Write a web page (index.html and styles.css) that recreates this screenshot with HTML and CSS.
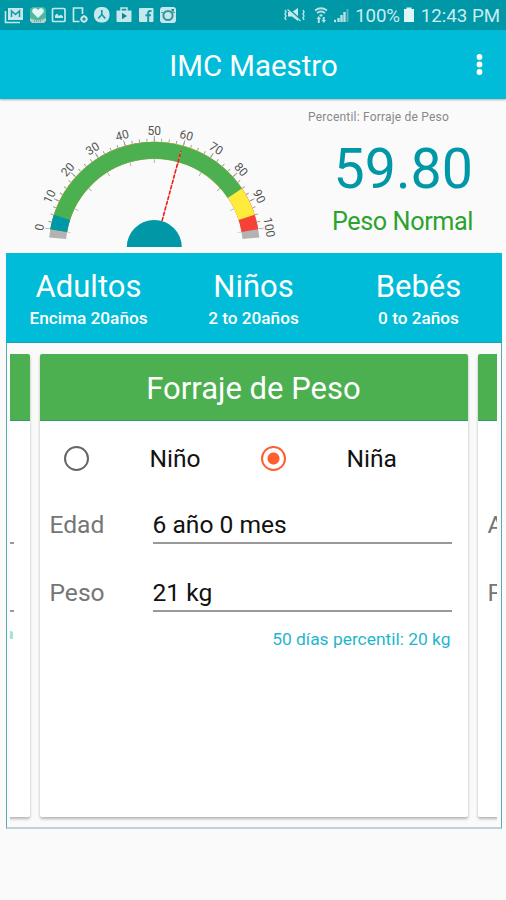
FILE: index.html
```html
<!DOCTYPE html>
<html lang="es">
<head>
    <meta charset="UTF-8">
    <meta name="viewport" content="width=device-width, initial-scale=1.0">
    <title>IMC Maestro</title>
    <link rel="stylesheet" href="styles.css">
</head>
<body>
    <div class="status-bar">
        <div class="status-icons">
            <!-- mail -->
            <svg width="20" height="18" viewBox="0 0 20 18"><path d="M4 2h15v12H4z" fill="#c5e8ec"/><path d="M1.500 5v11.500H16" fill="none" stroke="#c5e8ec" stroke-width="1.600"/><path d="M7.500 11V5l4 3.500 4-3.500v6" fill="none" stroke="#159aa8" stroke-width="1.500"/></svg>
            <!-- health -->
            <svg width="18" height="18" viewBox="0 0 18 18"><rect x="1" y="1" width="16" height="15" rx="4" fill="#4db99f"/><path d="M9 12L3.500 6.500C2 3 6.500.500 9 4c2.500-3.500 7-1 5.500 2.500z" fill="#e2f6f3"/><path d="M1 12c3 1.500 5 2 8 2s5-.500 8-2v3l-2 2H3l-2-2z" fill="#b9cfc9"/><path d="M5 15h8" stroke="#57817d" stroke-dasharray="1 1"/></svg>
            <!-- picture -->
            <svg width="16" height="18" viewBox="0 0 16 18"><rect x="1.500" y="2.500" width="12.500" height="13" rx="1" fill="none" stroke="#c5e8ec" stroke-width="1.700"/><path d="M4 12V9.500l2-2 2 2.500 2-1.500 2 2V12z" fill="#c5e8ec"/></svg>
            <!-- device settings -->
            <svg width="18" height="18" viewBox="0 0 18 18"><path d="M10.500 8V2H1.500v13.500h6" fill="none" stroke="#c5e8ec" stroke-width="1.700"/><circle cx="12" cy="13" r="2.500" fill="none" stroke="#c5e8ec" stroke-width="2"/><path d="M12 9v8M8 13h8" stroke="#c5e8ec" stroke-width="1.200"/><circle cx="12" cy="13" r="1.500" fill="#0d98a7"/></svg>
            <!-- person -->
            <svg width="17" height="18" viewBox="0 0 17 18"><rect x="0" y="1" width="15.500" height="15.500" rx="6.500" fill="#c5e8ec"/><path d="M7.800 4v4.500l-3.500 4M7.800 8.500l3.500 4" fill="none" stroke="#159aa8" stroke-width="1.700"/></svg>
            <!-- play store -->
            <svg width="18" height="18" viewBox="0 0 18 18"><path d="M.500 4.500h15V15a1 1 0 0 1-1 1h-13a1 1 0 0 1-1-1z" fill="#c5e8ec"/><path d="M5 5V2h6v3" fill="none" stroke="#c5e8ec" stroke-width="1.500"/><path d="M6 6.800l5 3.200-5 3.200z" fill="#0d8594"/></svg>
            <!-- facebook -->
            <svg width="16" height="18" viewBox="0 0 16 18"><rect x="0" y="2" width="14.500" height="14" rx="1" fill="#c5e8ec"/><path d="M12.500 5h-1.500q-1.800 0-1.800 2v9M6.500 9.300h5.500" fill="none" stroke="#159aa8" stroke-width="2"/></svg>
            <!-- instagram -->
            <svg width="18" height="18" viewBox="0 0 18 18"><rect x="1" y="1" width="16" height="16" rx="3" fill="#c5e8ec"/><circle cx="9" cy="9.500" r="4.600" fill="none" stroke="#2f97a2" stroke-width="2"/><path d="M2 6.500h3M13 6.500h3" stroke="#4aa5ae"/><rect x="12.500" y="3" width="2.500" height="2.500" fill="#218d99"/></svg>
        </div>
        <div class="status-info">
            <!-- vibrate / muted -->
            <svg width="24" height="18" viewBox="0 0 24 18"><path d="M5 6h4l6-4v13l-6-4.500H5z" fill="#c9ecef"/><path d="M5.500 2.500l12 11" stroke="#0097a7" stroke-width="1.500"/><path d="M4.500 3.500l13 11.500M2 4l1 2-1 2 1 2-1 2 1 2M20 4l1 2-1 2 1 2-1 2 1 2" fill="none" stroke="#b9e2e7" stroke-width="1.500"/></svg>
            <!-- wifi -->
            <svg class="wifi" width="14" height="18" viewBox="0 0 14 18"><path d="M1 4.500q6-4.500 12 0M3 7q4-3 8 0" fill="none" stroke="#b9e2e7" stroke-width="1.800"/><path d="M5 9q2-1.500 4 0l-2 2zM2.500 13l2.300-3 2.200 3H5.800v4H3.800v-4zM7.500 14h1.200v-3h2v3H12l-2.200 3z" fill="#b9e2e7"/></svg>
            <!-- signal -->
            <svg width="18" height="18" viewBox="0 0 18 18"><path d="M2 15h2M6.500 16v-4M9.500 16V9M12.500 16V6" stroke="#b9e2e7" stroke-width="2.400"/><path d="M15.500 16V3" stroke="#55b5c0" stroke-width="2"/></svg>
            <span class="battery-text">100%</span>
            <svg class="battery" width="12" height="18" viewBox="0 0 12 18"><path d="M3.500 1.500h5v1.500H11V16H1V3h2.500z" fill="#dff6f8"/></svg>
            <span class="clock">12:43 PM</span>
        </div>
    </div>

    <div class="header">
        <span class="header-side"></span>
        <h1 class="title">IMC Maestro</h1>
        <span class="header-side menu">
            <svg width="8" height="24" viewBox="0 0 8 24"><g fill="#fff"><circle cx="4.500" cy="4" r="2.900"/><circle cx="4.500" cy="11.500" r="2.900"/><circle cx="4.500" cy="19" r="2.900"/></g></svg>
        </span>
    </div>

    <div class="summary">
        <svg class="gauge" width="290" height="148" viewBox="0 100 290 148">
            <!-- scale: 0 sits 10deg above the left horizon, 1.6deg per unit -->
            <g transform="translate(154.300 247.500)" fill="none">
                <g stroke-width="17">
                    <path d="M-96.650 -9.300A97.100 97.100 0 0 1 96.650 -9.300" stroke="#b3b3b3"/>
                    <path d="M-95.630 -16.860A97.100 97.100 0 0 1 95.630 -16.860" stroke="#f44336"/>
                    <path d="M-95.630 -16.860A97.100 97.100 0 0 1 92.350 -30.010" stroke="#ffeb3b"/>
                    <path d="M-95.630 -16.860A97.100 97.100 0 0 1 80.500 -54.300" stroke="#4caf50"/>
                    <path d="M-95.630 -16.860A97.100 97.100 0 0 1 -92.350 -30.010" stroke="#0097a7"/>
                </g>
                <path class="ticks" pathLength="640" d="M-105.870 -18.670A107.500 107.500 0 0 1 105.870 -18.670" stroke-dasharray="2 14" stroke-dashoffset="1" stroke-width="3"/>
                <path class="ticks" pathLength="400" d="M-107.350 -18.930A109 109 0 0 1 107.350 -18.930" stroke-dasharray="1.200 38.800" stroke-dashoffset=".6" stroke-width="5"/>
                <path class="ticks" pathLength="400" d="M-85.190 -15.020A86.500 86.500 0 0 1 85.190 -15.020" stroke-dasharray="1.200 38.800" stroke-dashoffset=".6" stroke-width="4"/>
            </g>
            <g class="gauge-labels" transform="translate(154.300 247.500)">
                <text transform="rotate(-80)" y="-112.500">0</text>
                <text transform="rotate(-64)" y="-112.500">10</text>
                <text transform="rotate(-48)" y="-112.500">20</text>
                <text transform="rotate(-32)" y="-112.500">30</text>
                <text transform="rotate(-16)" y="-112.500">40</text>
                <text y="-112.500">50</text>
                <text transform="rotate(16)" y="-112.500">60</text>
                <text transform="rotate(32)" y="-112.500">70</text>
                <text transform="rotate(48)" y="-112.500">80</text>
                <text transform="rotate(64)" y="-112.500">90</text>
                <text transform="rotate(80)" y="-112.500">100</text>
            </g>
            <path d="M162 221L181 151" stroke="#ff8a80" stroke-width="1"/>
            <path d="M162 221L181 151" stroke="#f01818" stroke-width="1.500" stroke-dasharray="4 1.500"/>
            <path d="M126.800 247a27.500 27 0 0 1 55 0z" fill="#0097a7"/>
        </svg>
        <div class="result">
            <div class="result-label">Percentil: Forraje de Peso</div>
            <div class="result-value">59.80</div>
            <div class="result-status">Peso Normal</div>
        </div>
    </div>

    <div class="panel">
        <div class="tabs">
            <div class="tab">
                <div class="tab-name">Adultos</div>
                <div class="tab-range">Encima 20años</div>
            </div>
            <div class="tab">
                <div class="tab-name">Niños</div>
                <div class="tab-range">2 to 20años</div>
            </div>
            <div class="tab">
                <div class="tab-name">Bebés</div>
                <div class="tab-range">0 to 2años</div>
            </div>
        </div>

        <div class="pager">
            <div class="card">
                <div class="card-title"></div>
                <div class="genders"></div>
                <div class="field"><span></span><span class="field-value"></span></div>
                <div class="field"><span></span><span class="field-value"></span></div>
                <div class="hint-end"></div>
            </div>
            <div class="card">
                <div class="card-title">Forraje de Peso</div>
                <div class="genders">
                    <span class="radio"></span>
                    <span class="gender">Niño</span>
                    <span class="radio checked"></span>
                    <span class="gender">Niña</span>
                </div>
                <div class="field">
                    <span class="field-label">Edad</span>
                    <span class="field-value">6 año 0 mes</span>
                </div>
                <div class="field">
                    <span class="field-label">Peso</span>
                    <span class="field-value">21 kg</span>
                </div>
                <div class="hint">50 días percentil: 20 kg</div>
            </div>
            <div class="card">
                <div class="card-title"></div>
                <div class="genders"></div>
                <div class="field"><span class="field-label">A</span></div>
                <div class="field"><span class="field-label">P</span></div>
            </div>
        </div>
    </div>
</body>
</html>
```
FILE: styles.css
```css
* {
    margin: 0;
    padding: 0;
    box-sizing: border-box;
}

body {
    width: 506px;
    height: 900px;
    overflow: hidden;
    font-family: Roboto, sans-serif;
    background: #fafafa;
    color: #111;
}

svg {
    display: block;
    flex: none;
}

/* Status bar */
.status-bar {
    display: flex;
    justify-content: space-between;
    align-items: center;
    height: 30px;
    padding: 0 6px 0 4px;
    background: #0097a7;
    color: #c9ecef;
}

.status-icons {
    display: flex;
    gap: 4.6px;
}

.status-info {
    display: flex;
    align-items: center;
    font-size: 18.7px;
    line-height: 30px;
    white-space: nowrap;
}

.wifi {
    margin: 0 4px 0 7px;
}

.battery-text {
    margin-left: 5px;
    padding-top: 1px;
    letter-spacing: -0.2px;
}

.battery {
    margin: 0 6px 0 3px;
}

.clock {
    padding-top: 1px;
}

/* Header */
.header {
    display: flex;
    align-items: center;
    justify-content: space-between;
    position: relative;
    height: 69px;
    background: #00bcd8;
    box-shadow: 0 1px 2px rgba(0, 0, 0, 0.3);
}

.header-side {
    width: 31px;
}

.title {
    font-size: 29.4px;
    font-weight: 400;
    line-height: 36px;
    padding: 3px 0 0 1px;
    color: white;
}

/* Gauge and result */
.summary {
    display: flex;
    height: 154px;
}

.gauge {
    margin-top: 1px;
}

.gauge-labels {
    font-size: 12px;
    text-anchor: middle;
    fill: #555;
}

.ticks {
    stroke: #999;
}

.result {
    display: flex;
    flex-direction: column;
    align-items: flex-end;
    flex: 1;
    padding: 11px 33px 0 0;
    white-space: nowrap;
}

.result-label {
    font-size: 12px;
    line-height: 15px;
    margin-right: 24px;
    letter-spacing: 0.2px;
    color: #888;
}

.result-value {
    font-size: 55.5px;
    line-height: 66px;
    margin: 12px 0 0 0;
    color: #0097a7;
}

.result-status {
    font-size: 25.2px;
    line-height: 32px;
    margin-top: 3px;
    letter-spacing: -0.4px;
    color: #2ba32e;
}

/* Tabs + pager */
.panel {
    width: 496px;
    height: 576px;
    margin-left: 6px;
    border: 1px solid #5aa9b5;
    border-bottom: 2px solid #bcd3dc;
    border-top: 0;
}

.tabs {
    display: flex;
    height: 90px;
    margin: 0 -1px;
    padding: 15px 1px 0 0;
    background: #00bcd8;
    border-bottom: 1px solid #1f9fb0;
    color: white;
    text-align: center;
}

.tab {
    flex: 1;
}

.tab-name {
    font-size: 31px;
    line-height: 38px;
}

.tab-range {
    font-size: 17.2px;
    font-weight: 500;
    line-height: 24px;
}

.pager {
    display: flex;
    justify-content: center;
    gap: 10px;
    height: 484px;
    margin: 0 4px 0 3px;
    padding: 11px 0;
    overflow: hidden;
}

.card {
    flex: 0 0 428px;
    height: 463px;
    background: white;
    border-radius: 2px;
    box-shadow: 0 2px 3px rgba(0, 0, 0, 0.28);
}

.card-title {
    height: 67px;
    border-bottom: 1px solid #2f9a6a;
    border-radius: 2px 2px 0 0;
    background: #4caf50;
    color: white;
    font-size: 31px;
    line-height: 69px;
    text-align: center;
}

.genders {
    display: grid;
    grid-template-columns: 86px 111px 86px 1fr;
    align-items: center;
    height: 74px;
    padding-left: 24px;
    font-size: 24.6px;
}

.gender {
    padding-top: 1px;
}

.radio {
    width: 25px;
    height: 25px;
    border: 2px solid #666;
    border-radius: 50%;
}

.radio.checked {
    border-color: #ff5f2e;
    background: radial-gradient(circle, #ff5f2e 5.5px, transparent 6.5px);
}

.field {
    display: grid;
    grid-template-columns: 103px 299px;
    height: 68px;
    padding: 13px 0 20px 10px;
    font-size: 24.6px;
    line-height: 34px;
}

.field-label {
    color: #757575;
}

.field-value {
    height: 36px;
    border-bottom: 2px solid #999;
}

.hint {
    padding: 0 17px;
    margin-top: -4px;
    font-size: 17.4px;
    line-height: 24px;
    text-align: right;
    color: #1fb5d0;
}

/* tail of the neighbour's hint that reaches into view */
.hint-end {
    width: 3px;
    height: 8px;
    margin: 0 17px 0 auto;
    border-radius: 0 2px 0 0;
    background: #a5e3d5;
}
```
